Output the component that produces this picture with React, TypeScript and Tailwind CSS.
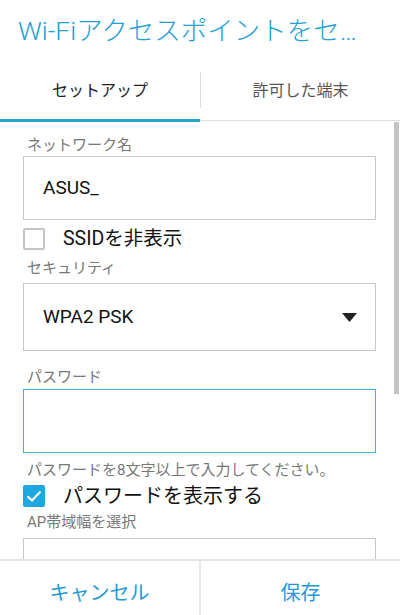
import React from "react";

const font = { fontFamily: "Roboto, 'Noto Sans CJK JP', sans-serif" };

function Label({ children, className = "" }: { children: React.ReactNode; className?: string }) {
  return <div className={`text-[15px] leading-[20px] text-[#777777] pl-[4px] ${className}`}>{children}</div>;
}

function Checkbox({ checked }: { checked: boolean }) {
  if (checked) {
    return (
      <div className="w-[22px] h-[22px] rounded-[2px] bg-[#1fa8e0] flex items-center justify-center">
        <svg width="16" height="12" viewBox="0 0 16 12" fill="none">
          <path d="M1.5 6.2 L6 10.5 L14.5 1.5" stroke="white" strokeWidth="2" />
        </svg>
      </div>
    );
  }
  return <div className="w-[22px] h-[22px] rounded-[2px] border-2 border-[#c4c4c4] bg-white" />;
}

export default function App() {
  return (
    <div className="w-[400px] h-[615px] bg-white flex flex-col overflow-hidden relative" style={font}>
      {/* Title */}
      <div className="h-[72px] shrink-0 pl-[18px] pt-[14px]">
        <div className="text-[26.5px] leading-[34px] font-light text-[#23a0d6] whitespace-nowrap">Wi-Fiアクセスポイントをセ…</div>
      </div>
      {/* Tabs */}
      <div className="h-[50px] shrink-0 flex">
        <div className="w-[200px] flex flex-col">
          <div className="flex-1 flex items-start justify-center pt-[9px] text-[16px] leading-[20px] text-[#222222]">セットアップ</div>
          <div className="h-[3px] bg-[#22a5d5]" />
        </div>
        <div className="w-[200px] flex flex-col">
          <div className="flex-1 flex">
            <div className="w-px h-[36px] bg-[#dddddd]" />
            <div className="flex-1 flex items-start justify-center pt-[9px] text-[16px] leading-[20px] text-[#555555]">許可した端末</div>
          </div>
          <div className="h-[2px] flex flex-col"><div className="h-px" /><div className="h-px bg-[#dddddd]" /></div>
          <div className="h-px" />
        </div>
      </div>
      {/* Content */}
      <div className="flex-1 overflow-hidden pl-[23px] pr-[24px] pt-[13px] relative">
        <Label className="mb-[1px]">ネットワーク名</Label>
        <div className="h-[64px] border border-[#c8c8c8] flex items-center pl-[19px] text-[19px] text-[#111111]">ASUS_</div>
        <div className="h-[38px] flex items-center">
          <Checkbox checked={false} />
          <span className="ml-[18px] text-[19.5px] text-[#111111]">SSIDを非表示</span>
        </div>
        <Label className="mb-[5px]">セキュリティ</Label>
        <div className="h-[68px] border border-[#c8c8c8] flex items-center justify-between pl-[19px] pr-[18px] text-[19px] text-[#111111]">
          <span>WPA2 PSK</span>
          <svg width="15" height="9" viewBox="0 0 15 9">
            <path d="M0 0 H15 L7.5 9 Z" fill="#222222" />
          </svg>
        </div>
        <Label className="mt-[16px] mb-[2px]">パスワード</Label>
        <div className="h-[64px] border border-[#3fb3d4]" />
        <div className="mt-[7px] text-[15px] leading-[20px] text-[#777777] pl-[4px] whitespace-nowrap">パスワードを8文字以上で入力してください。</div>
        <div className="h-[32px] flex items-center">
          <Checkbox checked={true} />
          <span className="ml-[18px] text-[20px] text-[#111111]">パスワードを表示する</span>
        </div>
        <Label className="mb-[6px]">AP帯域幅を選択</Label>
        <div className="h-[64px] border border-[#c8c8c8]" />
      </div>
      {/* Scrollbar */}
      <div className="absolute right-[1px] top-[122px] w-[5px] h-[272px] bg-[#c4c4c4]" />
      {/* Bottom bar */}
      <div className="h-[56px] shrink-0 border-t-2 border-[#e4e4e4] flex bg-white">
        <div className="flex-1 flex justify-center pt-[20px] text-[20px] leading-[24px] text-[#1e9bd5]">キャンセル</div>
        <div className="w-[2px] bg-[#e8e8e8]" />
        <div className="flex-1 flex justify-center pt-[20px] text-[20px] leading-[24px] text-[#1e9bd5]">保存</div>
      </div>
    </div>
  );
}
